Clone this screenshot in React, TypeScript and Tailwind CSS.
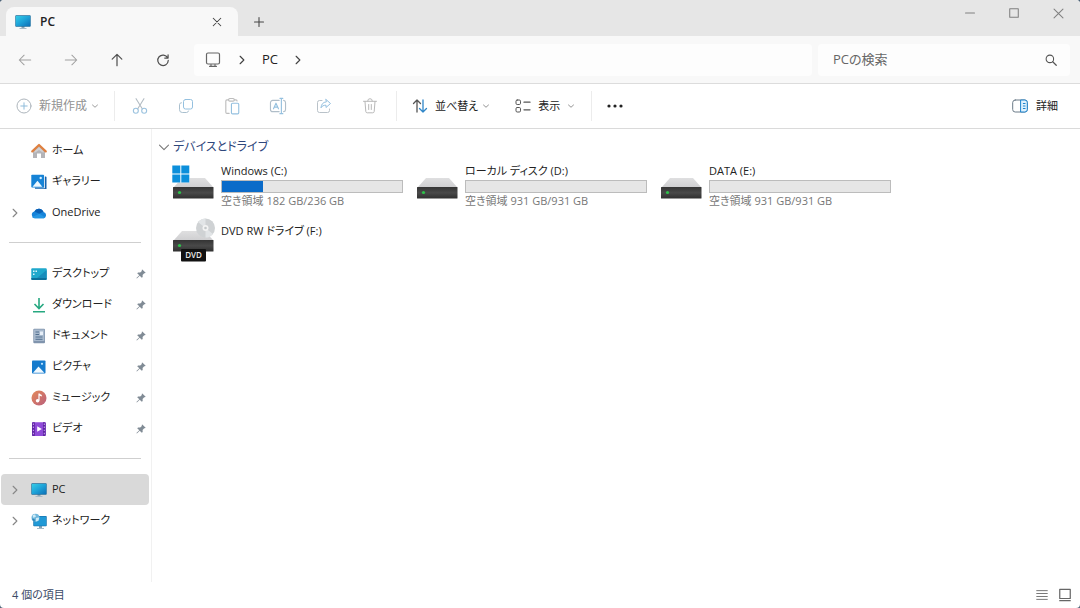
import type { ReactNode } from 'react'

type IconProps = { className?: string }

type NavItem = {
  name: string
  icon: ReactNode
  expandable?: boolean
  pinned?: boolean
  selected?: boolean
}

type Drive = {
  name: string
  icon: ReactNode
  used?: number
  total?: number
}

const Stroke = ({ size = 16, className = '', children }: { size?: number; className?: string; children: ReactNode }) => (
  <svg
    width={size}
    height={size}
    viewBox="0 0 16 16"
    fill="none"
    stroke="currentColor"
    strokeLinecap="round"
    strokeLinejoin="round"
    className={`shrink-0 ${className}`}
    aria-hidden="true"
  >
    {children}
  </svg>
)

const Chevron = ({ className }: IconProps) => (
  <Stroke size={12} className={className}>
    <path d="m5.5 3 5 5-5 5" strokeWidth="1.5" />
  </Stroke>
)

const ChevronDown = ({ className }: IconProps) => (
  <Stroke size={8} className={className}>
    <path d="m3 6 5 4.500 5-4.500" strokeWidth="1.8" />
  </Stroke>
)

const MonitorIcon = () => (
  <svg width="16" height="16" viewBox="0 0 16 16" className="shrink-0" aria-hidden="true">
    <defs>
      <linearGradient id="screen" x1="0" y1="0" x2="1" y2="1">
        <stop offset="0" stopColor="#35cde6" />
        <stop offset="0.5" stopColor="#1da2d8" />
        <stop offset="1" stopColor="#0e6fb6" />
      </linearGradient>
    </defs>
    <path d="M6.500 12h3v2h-3z" fill="#8aa5b6" />
    <path d="M4.500 14h7v1h-7z" fill="#a9bac5" />
    <rect x="0.3" y="1.3" width="15.4" height="11.4" rx="0.8" fill="#1b6f9f" />
    <rect x="0.9" y="1.9" width="14.2" height="10.2" rx="0.3" fill="url(#screen)" />
  </svg>
)

const HomeIcon = () => (
  <svg width="16" height="16" viewBox="0 0 16 16" className="shrink-0" aria-hidden="true">
    <path d="M2 7 8 2l6 5v8h-4v-4.500H6V15H2z" fill="#b4b4b8" />
    <path d="M3.500 8 8 4l4.500 4v2L8 7l-4.500 3z" fill="#d0d0d3" />
    <path d="M1.300 8.400 8 2l6.700 6.400" fill="none" stroke="#df8040" strokeWidth="2.200" strokeLinecap="round" strokeLinejoin="round" />
  </svg>
)

const GalleryIcon = () => (
  <svg width="16" height="16" viewBox="0 0 16 16" className="shrink-0" aria-hidden="true">
    <path d="M3 2.500h11.500a1 1 0 0 1 1 1V15H4z" fill="#1462ad" />
    <path d="M13 1.500h.8v12.800H1v-.8h12z" fill="#fff" />
    <rect x="0.3" y="0.8" width="12.7" height="12.7" rx="0.8" fill="#1683d6" />
    <path d="m1.500 12.700 5-6 4.800 6z" fill="#eef8ff" />
    <circle cx="9.700" cy="4" r="1.200" fill="#d5efff" />
  </svg>
)

const CloudIcon = () => (
  <svg width="16" height="16" viewBox="0 0 16 16" className="shrink-0" aria-hidden="true">
    <path d="M3.700 13.200A3.500 3.500 0 0 1 3.300 6.400 5 5 0 0 1 12.500 7a3.200 3.200 0 0 1 .3 6.200z" fill="#1683d9" />
    <path d="M3.300 6.400A5 5 0 0 1 12.500 7c-2 .1-3 1-4 1.800z" fill="#0a5fb4" />
    <path d="m1 12 7.500-3.200 5.900 3.600a3 3 0 0 1-1.600.8H3.700A3.500 3.500 0 0 1 1 12z" fill="#2396e4" />
  </svg>
)

const DesktopIcon = () => (
  <svg width="16" height="16" viewBox="0 0 16 16" className="shrink-0" aria-hidden="true">
    <rect x="0.3" y="2.3" width="15.4" height="11.7" rx="0.9" fill="#1fa8cc" />
    <path d="M.3 12h15.400v1a1 1 0 0 1-1 1H1.300a1 1 0 0 1-1-1z" fill="#0c709b" />
    <path d="M15.700 4v8H6z" fill="#178dbb" />
    <path d="M2 4.500h1.500V6H2zM2 7.500h1.500V9H2zM4.500 4.500H6V6H4.500z" fill="#d9f6fb" />
  </svg>
)

const DownloadIcon = () => (
  <svg width="16" height="16" viewBox="0 0 16 16" className="shrink-0" fill="none" stroke="#26a880" strokeWidth="1.600" aria-hidden="true">
    <path d="M8 1v10.500M3.500 7 8 11.500 12.500 7M2 14.700h12" />
  </svg>
)

const DocumentIcon = () => (
  <svg width="16" height="16" viewBox="0 0 16 16" className="shrink-0" aria-hidden="true">
    <rect x="2.3" y="0.8" width="11.7" height="14.4" rx="1" fill="#8094ad" />
    <rect x="3" y="1.5" width="10.3" height="11.5" rx="0.5" fill="#a8b9cd" />
    <path d="M4.500 4H8M4.500 6.500H8M4.500 9h7M4.500 11.300h7" stroke="#52708f" />
    <path d="M9 3.500h3V7H9z" fill="#e7eff8" />
  </svg>
)

const PictureIcon = () => (
  <svg width="16" height="16" viewBox="0 0 16 16" className="shrink-0" aria-hidden="true">
    <rect x="1" y="1.5" width="13.5" height="13" rx="0.8" fill="#157bcd" />
    <path d="m2 13.800 5.500-6.300 5.800 6.300z" fill="#f0f9ff" />
    <circle cx="11" cy="4.800" r="1.100" fill="#bfe5ff" />
  </svg>
)

const MusicIcon = () => (
  <svg width="16" height="16" viewBox="0 0 16 16" className="shrink-0" aria-hidden="true">
    <defs>
      <linearGradient id="music" x1="0" y1="0" x2="1" y2="1">
        <stop offset="0" stopColor="#e58a58" />
        <stop offset="1" stopColor="#b95f7d" />
      </linearGradient>
    </defs>
    <circle cx="8" cy="8" r="7.500" fill="url(#music)" />
    <path d="M8 3.500v7" stroke="#fff" strokeWidth="1.200" />
    <path d="M8 3.500 10.800 5v1.600L8 5.500z" fill="#fff" />
    <circle cx="6.600" cy="10.700" r="1.800" fill="#fff" />
  </svg>
)

const VideoIcon = () => (
  <svg width="16" height="16" viewBox="0 0 16 16" className="shrink-0" aria-hidden="true">
    <rect x="1" y="1.2" width="13.7" height="13.7" rx="0.9" fill="#8f4ad8" />
    <path d="M1 2a1 1 0 0 1 1-.8h1.800v13.700H2a1 1 0 0 1-1-1zM12 1.200h1.800a1 1 0 0 1 .9.800v12a1 1 0 0 1-.9.900H12z" fill="#5f25a4" />
    <path d="M2.400 2.500v12M13.300 2.500v12" stroke="#c39aeb" strokeWidth="1.100" strokeDasharray="1.400 1.700" />
    <path d="m6.200 5.200 4.600 2.800-4.600 2.800z" fill="#fff" />
  </svg>
)

const NetworkIcon = () => (
  <svg width="16" height="16" viewBox="0 0 16 16" className="shrink-0" aria-hidden="true">
    <path d="M8 13h3v2H8zM6 15h7v.8H6z" fill="#86a3b5" />
    <rect x="2.3" y="3" width="13.4" height="10.3" rx="0.7" fill="#166fa8" />
    <rect x="2.9" y="3.6" width="12.2" height="9.1" fill="#2099d6" />
    <circle cx="4.500" cy="4.800" r="4" fill="#70b7dc" />
    <path d="M1.500 2.300 4 1.200 5 3.500 2.500 5zM5 5l3.200-.6-.7 3.100L5 8.500z" fill="#cdeaf5" />
    <path d="M1 5.500 3.500 6l.5 2.600C2.500 8.300 1.200 7 1 5.500z" fill="#2d83b5" />
  </svg>
)

const PinIcon = () => (
  <svg width="10" height="10" viewBox="0 0 10 10" className="shrink-0" aria-hidden="true">
    <path d="M6.300.4 9.700 3.700l-.8.600-.7-.1-1.600 1.700.1 2-.9.900-2.100-2.100L.9 9.600l-.5-.5 2.900-2.900L1.200 4.300l.9-.9 2.100.1 1.700-1.600-.2-.8z" fill="#808b95" />
  </svg>
)

// y is the back edge of the case front
const DriveBody = ({ y = 25 }: { y?: number }) => (
  <g>
    <defs>
      <linearGradient id="lid" x1="0" y1="0" x2="0" y2="1">
        <stop offset="0" stopColor="#dfdfe0" />
        <stop offset="1" stopColor="#cfcfd1" />
      </linearGradient>
      <linearGradient id="case" x1="0" y1="0" x2="0" y2="1">
        <stop offset="0" stopColor="#343434" />
        <stop offset="0.5" stopColor="#494949" />
        <stop offset="1" stopColor="#2f2f2f" />
      </linearGradient>
    </defs>
    <path d={`M2 ${y + 1} 10 ${y - 8}h23l8 9z`} fill="url(#lid)" />
    <rect x="1" y={y + 1} width="40.5" height="11.5" rx="0.5" fill="url(#case)" />
    <circle cx="7.500" cy={y + 6.5} r="1.600" fill="#2dc44a" />
  </g>
)

const DriveIcon = ({ windows = false }: { windows?: boolean }) => (
  <svg width="44" height="44" viewBox="0 0 44 44" className="shrink-0" aria-hidden="true">
    <DriveBody />
    {windows && (
      <g>
        <path d="M0 4h17.500v17.500H0z" fill="#fff" />
        <path d="M.3 4.500h8v8h-8zM9.300 4.500h8v8h-8zM.3 13.500h8v8h-8zM9.300 13.500h8v8h-8z" fill="#0c8fdb" />
      </g>
    )}
  </svg>
)

const DvdIcon = () => (
  <svg width="44" height="44" viewBox="0 0 44 44" className="shrink-0 overflow-visible" aria-hidden="true">
    <DriveBody y={18} />
    <circle cx="33.500" cy="7" r="9.500" fill="#cfd2d4" />
    <path d="M33.500 7 26 1.100a9.500 9.500 0 0 1 7.500-3.600zM33.500 7l7.500 5.900a9.500 9.500 0 0 1-7.500 3.600z" fill="#e2e5e7" />
    <circle cx="33.500" cy="7" r="3" fill="#f3f3f3" />
    <circle cx="33.500" cy="7" r="1.300" fill="#c4c8ca" />
    <rect x="9" y="28" width="25" height="12.5" rx="1" fill="#111" />
    <text x="21.500" y="37" textAnchor="middle" fontSize="8" fontWeight="600" fill="#e8e8e8">
      DVD
    </text>
  </svg>
)

const quickItems: NavItem[] = [
  { name: 'ホーム', icon: <HomeIcon /> },
  { name: 'ギャラリー', icon: <GalleryIcon /> },
  { name: 'OneDrive', icon: <CloudIcon />, expandable: true }
]

const pinnedItems: NavItem[] = [
  { name: 'デスクトップ', icon: <DesktopIcon />, pinned: true },
  { name: 'ダウンロード', icon: <DownloadIcon />, pinned: true },
  { name: 'ドキュメント', icon: <DocumentIcon />, pinned: true },
  { name: 'ピクチャ', icon: <PictureIcon />, pinned: true },
  { name: 'ミュージック', icon: <MusicIcon />, pinned: true },
  { name: 'ビデオ', icon: <VideoIcon />, pinned: true }
]

const deviceItems: NavItem[] = [
  { name: 'PC', icon: <MonitorIcon />, expandable: true, selected: true },
  { name: 'ネットワーク', icon: <NetworkIcon />, expandable: true }
]

const drives: Drive[] = [
  { name: 'Windows (C:)', icon: <DriveIcon windows />, used: 54, total: 236 },
  { name: 'ローカル ディスク (D:)', icon: <DriveIcon />, used: 0, total: 931 },
  { name: 'DATA (E:)', icon: <DriveIcon />, used: 0, total: 931 },
  { name: 'DVD RW ドライブ (F:)', icon: <DvdIcon /> }
]

const editActions = [
  {
    label: '切り取り',
    icon: (
      <Stroke size={18} className="text-[#b3bcc3]">
        <path d="M4.500 1.500 10 10.500M11.500 1.500 6 10.500" />
        <g stroke="#9cc3df">
          <circle cx="4.300" cy="12.200" r="2.200" />
          <circle cx="11.700" cy="12.200" r="2.200" />
        </g>
      </Stroke>
    )
  },
  {
    label: 'コピー',
    icon: (
      <Stroke className="text-[#a9bfce]">
        <rect x="5.5" y="1.5" width="9" height="9.5" rx="2" stroke="#94c0df" />
        <path d="M3.500 4.700a2 2 0 0 0-2 2v5a2.800 2.800 0 0 0 2.800 2.800h4.200a2 2 0 0 0 2-1.500" />
      </Stroke>
    )
  },
  {
    label: '貼り付け',
    icon: (
      <Stroke size={18} className="text-[#bdbdbd]">
        <path d="M5 2.500H3.500a1 1 0 0 0-1 1v10a1 1 0 0 0 1 1h2M10 2.500h1.500a1 1 0 0 1 1 1" />
        <rect x="5" y="1.3" width="5" height="2.4" rx="1" />
        <rect x="7.5" y="5.5" width="6.5" height="9.5" rx="1" stroke="#94c0df" />
      </Stroke>
    )
  },
  {
    label: '名前の変更',
    icon: (
      <Stroke size={18} className="text-[#b0bec9]">
        <path d="M9 3H3.300a2 2 0 0 0-2 2v6a2 2 0 0 0 2 2H9M13 3a2 2 0 0 1 1.700 2v6A2 2 0 0 1 13 13" />
        <path d="m4 10.500 2.200-5 2.200 5M4.800 9h2.900M9.700 1.200h2.600M9.700 14.800h2.600M11 1.200v13.600" stroke="#94c0df" />
      </Stroke>
    )
  },
  {
    label: '共有',
    icon: (
      <Stroke className="text-[#b9c2c9]">
        <path d="M6 2.500H3.500a2 2 0 0 0-2 2v8a2 2 0 0 0 2 2h8a2 2 0 0 0 2-2V11" />
        <path d="m10 1.500 4.500 4-4.500 4v-2.300c-2.500 0-4 .8-5 2.600.2-3.300 2-5.700 5-5.900z" stroke="#94c0df" />
      </Stroke>
    )
  },
  {
    label: '削除',
    icon: (
      <Stroke className="text-[#b8b8b8]">
        <path d="M1.500 3.300h13M5.700 3a2.300 2.300 0 0 1 4.600 0M3 3.500l.8 10a1.500 1.500 0 0 0 1.500 1.300h5.400a1.500 1.500 0 0 0 1.500-1.300l.8-10M6.700 6.500v5M9.300 6.500v5" />
      </Stroke>
    )
  }
]

function TitleBar() {
  return (
    <header className="flex h-9 justify-between bg-[#e6e6e6] pl-[6px]">
      <div className="flex items-end">
        <div className="flex h-[29px] w-[232px] items-center rounded-t-lg bg-[#f8f8f8] pl-[9px] pr-[9px]">
          <MonitorIcon />
          <span className="ml-[9px] grow text-xs font-semibold">PC</span>
          <button aria-label="タブを閉じる" className="flex size-6 items-center justify-center text-[#444]">
            <Stroke size={12}>
              <path d="m3 3 10 10M13 3 3 13" strokeWidth="1.4" />
            </Stroke>
          </button>
        </div>
        <button aria-label="新しいタブ" className="ml-[9px] flex h-[29px] w-6 items-center justify-center text-[#444]">
          <Stroke size={12}>
            <path d="M8 2v12M2 8h12" strokeWidth="1.4" />
          </Stroke>
        </button>
      </div>
      <div className="flex h-[26px] text-[#808080]">
        <button aria-label="最小化" className="flex w-11 items-center justify-center">
          <Stroke size={12}>
            <path d="M2 8h12" strokeWidth="1.4" />
          </Stroke>
        </button>
        <button aria-label="最大化" className="flex w-11 items-center justify-center">
          <Stroke size={12}>
            <rect x="2.3" y="2.3" width="11.4" height="11.4" strokeWidth="1.4" />
          </Stroke>
        </button>
        <button aria-label="閉じる" className="flex w-11 items-center justify-center">
          <Stroke size={13}>
            <path d="m2.500 2.500 11 11M13.500 2.500l-11 11" strokeWidth="1.3" />
          </Stroke>
        </button>
      </div>
    </header>
  )
}

function AddressBar() {
  return (
    <div className="flex h-12 items-center border-b border-[#dcdcdc] bg-[#f8f8f8] pl-[2px] pr-[10px]">
      <nav className="flex" aria-label="移動">
        <button aria-label="戻る" className="flex h-8 w-[46px] items-center justify-center text-[#a0a0a0]">
          <Stroke size={14}>
            <path d="M14.500 8h-13M7 2.500 1.500 8 7 13.500" strokeWidth="1.2" />
          </Stroke>
        </button>
        <button aria-label="進む" className="flex h-8 w-[46px] items-center justify-center text-[#a0a0a0]">
          <Stroke size={14}>
            <path d="M1.500 8h13M9 2.500 14.500 8 9 13.500" strokeWidth="1.2" />
          </Stroke>
        </button>
        <button aria-label="上へ" className="flex h-8 w-[46px] items-center justify-center text-[#505050]">
          <Stroke size={14}>
            <path d="M8 14.500v-13M2.500 7 8 1.500 13.500 7" strokeWidth="1.4" />
          </Stroke>
        </button>
        <button aria-label="最新の情報に更新" className="flex h-8 w-[46px] items-center justify-center text-[#505050]">
          <Stroke size={14}>
            <path d="M13.300 5.500A6 6 0 1 0 14 8.500M13.800 2v3.800H10" strokeWidth="1.4" />
          </Stroke>
        </button>
      </nav>
      <div className="ml-2 flex h-8 grow items-center rounded bg-[#fdfdfd] pl-[11px]">
        <Stroke className="text-[#666]">
          <rect x="1.5" y="1" width="13" height="11" rx="1.5" strokeWidth="1.2" />
          <path d="M6 12.500V14M10 12.500V14M4.500 14.300h7" strokeWidth="1.2" />
        </Stroke>
        <Chevron className="ml-[15px] text-[#444]" />
        <a href="#pc" className="mx-[14px] text-[13px]">
          PC
        </a>
        <Chevron className="text-[#444]" />
      </div>
      <label className="ml-[6px] flex h-8 w-[252px] items-center rounded bg-[#fdfdfd] pl-[15px] pr-[13px]">
        <input
          type="search"
          aria-label="PCの検索"
          placeholder="PCの検索"
          className="min-w-0 grow bg-transparent text-[13px] outline-none placeholder:text-[#666]"
        />
        <Stroke size={12} className="text-[#555]">
          <circle cx="6.500" cy="6.500" r="5" strokeWidth="1.4" />
          <path d="m10.300 10.300 4.700 4.700" strokeWidth="1.6" />
        </Stroke>
      </label>
    </div>
  )
}

const Divider = () => <span className="h-[30px] w-px bg-[#ececec]" />

function Toolbar() {
  return (
    <div className="flex h-[45px] items-center border-b border-[#dadada] bg-white">
      <button disabled className="flex h-8 w-[114px] items-center pl-4 text-xs text-[#929292]">
        <Stroke className="text-[#adb5bc]">
          <circle cx="8" cy="8" r="7" />
          <path d="M8 4.800v6.400M4.800 8h6.400" stroke="#8fbcdb" />
        </Stroke>
        <span className="ml-[7px] mr-1">新規作成</span>
        <ChevronDown />
      </button>
      <Divider />
      <div className="flex w-[281px] pl-[2px]">
        {editActions.map(action => (
          <button key={action.label} disabled aria-label={action.label} className="flex h-8 w-[46px] items-center justify-center">
            {action.icon}
          </button>
        ))}
      </div>
      <Divider />
      <button className="ml-[15px] flex h-8 items-center">
        <Stroke className="text-[#555]">
          <path d="M5 14V2M1.500 5.500 5 2l3.500 3.500" strokeWidth="1.3" />
          <path d="M11 2v12M7.500 10.500 11 14l3.500-3.500" stroke="#2f86c8" strokeWidth="1.3" />
        </Stroke>
        <span className="ml-[7px] mr-1">並べ替え</span>
        <ChevronDown className="text-[#888]" />
      </button>
      <button className="ml-[25px] flex h-8 items-center">
        <Stroke className="text-[#555]">
          <rect x="1" y="2" width="4.5" height="4.5" rx="1.2" />
          <rect x="1" y="9.5" width="4.5" height="4.5" rx="1.2" />
          <path d="M9 4.200h6M9 11.800h6" strokeWidth="1.3" />
        </Stroke>
        <span className="mx-[7px]">表示</span>
        <ChevronDown className="text-[#888]" />
      </button>
      <span className="ml-4 h-[30px] w-px bg-[#ececec]" />
      <button aria-label="その他" className="flex h-8 w-[46px] items-center justify-center text-[#222]">
        <svg width="16" height="4" viewBox="0 0 16 4" fill="currentColor" aria-hidden="true">
          <circle cx="2" cy="2" r="1.600" />
          <circle cx="8" cy="2" r="1.600" />
          <circle cx="14" cy="2" r="1.600" />
        </svg>
      </button>
      <button className="ml-auto mr-[22px] flex h-8 items-center gap-2">
        <Stroke className="text-[#6b7b88]">
          <rect x="0.7" y="2" width="14.6" height="12" rx="2.5" />
          <path d="M9 2h3.800a2.500 2.500 0 0 1 2.500 2.500v7a2.500 2.500 0 0 1-2.500 2.500H9z" fill="#dff1fd" stroke="#1c83cd" />
          <path d="M11.300 5.500h1.800M11.300 8h1.800M11.300 10.500h1.800" stroke="#1c83cd" />
        </Stroke>
        <span>詳細</span>
      </button>
    </div>
  )
}

function NavList({ items }: { items: NavItem[] }) {
  return (
    <ul>
      {items.map(item => (
        <li key={item.name}>
          <a
            href={`#${item.name}`}
            aria-current={item.selected ? 'page' : undefined}
            className={`flex h-[31px] items-center rounded-sm pl-2 pr-[3px] ${item.selected ? 'bg-[#d9d9d9]' : ''}`}
          >
            <span className="flex w-[22px] text-[#888]">{item.expandable && <Chevron />}</span>
            {item.icon}
            <span className="ml-[5px] grow whitespace-nowrap">{item.name}</span>
            {item.pinned && <PinIcon />}
          </a>
        </li>
      ))}
    </ul>
  )
}

function Sidebar() {
  return (
    <nav className="w-[152px] shrink-0 border-r border-[#f1f1f1] pl-px pr-[2px] pt-[6px]" aria-label="ナビゲーション">
      <NavList items={quickItems} />
      <hr className="mx-2 mb-[15px] mt-[14px] border-[#cfcfcf]" />
      <NavList items={pinnedItems} />
      <hr className="mx-2 mb-[15px] mt-[14px] border-[#cfcfcf]" />
      <NavList items={deviceItems} />
    </nav>
  )
}

function DriveTile({ drive }: { drive: Drive }) {
  const { name, icon, used, total } = drive
  return (
    <li className="flex h-[60px] gap-[5px]">
      {icon}
      <div className="w-[182px] pt-[2px]">
        <p className="whitespace-nowrap leading-4">{name}</p>
        {used !== undefined && total !== undefined && (
          <>
            <div className="mt-px h-[13px] border border-[#bcbcbc] bg-[#e6e6e6]">
              <div className="h-full bg-[#0a6bc9]" style={{ width: `${(used / total) * 100}%` }} />
            </div>
            <p className="whitespace-nowrap leading-4 text-[#777]">
              空き領域 {total - used} GB/{total} GB
            </p>
          </>
        )}
      </div>
    </li>
  )
}

export default function App() {
  return (
    <div className="bg-[#4e6478]">
      <div className="flex min-h-screen flex-col overflow-hidden rounded-[4px] bg-white font-['Open_Sans','Noto_Sans_CJK_JP',sans-serif] text-[11px] text-[#222] [font-feature-settings:'palt']">
        <TitleBar />
        <AddressBar />
        <Toolbar />
        <div className="flex grow">
          <Sidebar />
          <main className="grow pl-[6px] pt-[7px]">
            <h2>
              <button className="flex h-[22px] items-center gap-[3px] text-xs text-[#2f477c]">
                <Stroke size={12} className="text-[#777]">
                  <path d="M2 5.500 8 11.500l6-6" strokeWidth="1.4" />
                </Stroke>
                デバイスとドライブ
              </button>
            </h2>
            <ul className="mt-[3px] grid grid-cols-[repeat(auto-fill,244px)] pl-[14px]">
              {drives.map(drive => (
                <DriveTile key={drive.name} drive={drive} />
              ))}
            </ul>
          </main>
        </div>
        <footer className="flex h-[26px] items-center justify-between pl-3 pr-2 text-[#3b4a66]">
          <span>4 個の項目</span>
          <div className="flex gap-[9px] text-[#666]">
            <button aria-label="詳細表示">
              <Stroke size={14}>
                <path d="M1.500 3h13M1.500 6.300h13M1.500 9.700h13M1.500 13h13" strokeLinecap="butt" />
              </Stroke>
            </button>
            <button aria-label="大アイコン表示">
              <Stroke size={14}>
                <rect x="2" y="1.5" width="12" height="10.5" strokeWidth="1.4" />
                <path d="M2 14.500h12" strokeWidth="1.4" />
              </Stroke>
            </button>
          </div>
        </footer>
      </div>
    </div>
  )
}
